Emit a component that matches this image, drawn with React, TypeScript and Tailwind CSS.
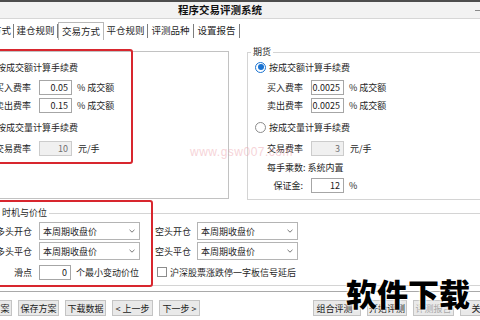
import { ReactNode } from "react";

const FONT = "font-['Noto_Sans_CJK_SC','Microsoft_YaHei',sans-serif]";

function Radio({ checked }: { checked?: boolean }) {
    return checked ? (
        <span className="w-[11px] h-[11px] rounded-full border border-[#1a73d1] flex items-center justify-center shrink-0 bg-white">
            <span className="w-[6px] h-[6px] rounded-full bg-[#1a73d1]" />
        </span>
    ) : (
        <span className="w-[11px] h-[11px] rounded-full border border-[#8c8c8c] bg-white shrink-0" />
    );
}

function Field({ value, disabled, w = "w-[33px]" }: { value: string; disabled?: boolean; w?: string }) {
    return (
        <div className={`${w} h-[15px] border flex items-center justify-end pr-[3px] shrink-0 ${disabled ? "bg-[#f0f0f0] border-[#cccccc] text-[#707070]" : "bg-white border-[#a6a6a6] text-[#1a1a1a]"}`}>
            {value}
        </div>
    );
}

function Label({ children }: { children: ReactNode }) {
    return <div className="w-[44px] pr-[8px] text-right shrink-0 whitespace-nowrap">{children}</div>;
}

function Row({ children, className = "" }: { children: ReactNode; className?: string }) {
    return <div className={`h-[18px] flex items-center ${className}`}>{children}</div>;
}

interface FeeProps {
    buy: string;
    sell: string;
    perLot: string;
    futures?: boolean;
}

function FeeRows({ buy, sell, perLot, futures }: FeeProps) {
    return (
        <>
            <Row className="gap-[3px]">
                <Radio checked />
                <span>按成交额计算手续费</span>
            </Row>
            <Row className="mt-[2px] pl-[12px]">
                <Label>买入费率</Label>
                <Field value={buy} />
                <span className="ml-[5px]">% 成交额</span>
            </Row>
            <Row className="pl-[12px]">
                <Label>卖出费率</Label>
                <Field value={sell} />
                <span className="ml-[5px]">% 成交额</span>
            </Row>
            <Row className="mt-[4px] gap-[3px]">
                <Radio />
                <span>按成交量计算手续费</span>
            </Row>
            <Row className="mt-[3px] pl-[12px]">
                <Label>交易费率</Label>
                <Field value={perLot} disabled />
                <span className="ml-[6px]">元/手</span>
            </Row>
            {futures && (
                <>
                    <Row className="mt-[1px] pl-[12px]">
                        <span>每手乘数: 系统内置</span>
                    </Row>
                    <Row className="pl-[12px]">
                        <Label>保证金:</Label>
                        <Field value="12" />
                        <span className="ml-[5px]">%</span>
                    </Row>
                </>
            )}
        </>
    );
}

function Select({ value }: { value: string }) {
    return (
        <div className="w-[101px] h-[18px] border border-[#b4b4b4] bg-white flex items-center pl-[3px] pr-[4px] shrink-0">
            <span className="flex-1">{value}</span>
            <svg width="6" height="4" viewBox="0 0 6 4" className="text-[#777]">
                <path d="M0.5 0.8 L3 3.2 L5.5 0.8" fill="none" stroke="currentColor" strokeWidth="1" />
            </svg>
        </div>
    );
}

function Btn({ children, w = "w-[41px]", disabled }: { children: ReactNode; w?: string; disabled?: boolean }) {
    return (
        <div className={`${w} h-[16px] shrink-0 border border-[#c4c4c4] bg-[#e9e9e9] flex items-center justify-center whitespace-nowrap ${disabled ? "text-[#a8a8a8]" : "text-[#1a1a1a]"}`}>
            {children}
        </div>
    );
}

const tabs = [
    { name: "方式", w: "w-[24px] ml-[-10px] justify-end pr-[2px]" },
    { name: "建仓规则", w: "w-[44px] justify-center" },
    { name: "交易方式", w: "w-[46px] justify-center", active: true },
    { name: "平仓规则", w: "w-[44px] justify-center" },
    { name: "评测品种", w: "w-[46px] justify-center" },
    { name: "设置报告", w: "w-[46px] justify-center" },
];

export default function App() {
    return (
        <div className={`w-[480px] h-[320px] overflow-hidden relative bg-white text-[9px] leading-none text-[#1f1f1f] ${FONT}`}>
            <div className="h-[2px] bg-[#4d4d4d]" />
            <div className="h-[17px] bg-[#f2f2f2] border-b border-[#d6d6d6] flex items-center pl-[178px]">
                <span className="font-bold text-[10.5px] text-[#111]">程序交易评测系统</span>
                <span className="ml-auto mr-[-3px] w-[8px] h-[1px] bg-[#8a8a8a]" />
            </div>

            {/* tabs */}
            <div className="h-[21px] flex items-end text-[9.5px]">
                {tabs.map(t =>
                    t.active ? (
                        <div key={t.name} className={`${t.w} h-[18px] flex items-center border border-b-0 border-[#b8b8b8] bg-white`}>
                            {t.name}
                        </div>
                    ) : (
                        <div key={t.name} className={`${t.w} h-[14px] mb-[2px] flex items-center border-r border-[#7d7d7d] whitespace-nowrap`}>
                            {t.name}
                        </div>
                    )
                )}
            </div>

            {/* fee settings */}
            <div className="mt-[6px] flex items-start">
                <div className="ml-[-25px] w-[254px] h-[148px] mt-[5px] shrink-0 border border-[#c2c2c2] bg-white pt-[6px] pl-[7px]">
                    <FeeRows buy="0.05" sell="0.15" perLot="10" />
                </div>
                <fieldset className="ml-[18px] w-[250px] h-[154px] shrink-0 border border-[#d4d4d4]">
                    <legend className="ml-[3px] px-[2px] leading-[12px] h-[12px]">期货</legend>
                    <div className="pl-[7px]">
                        <FeeRows buy="0.0025" sell="0.0025" perLot="3" futures />
                    </div>
                </fieldset>
            </div>

            {/* timing and price */}
            <fieldset className="mt-[7px] ml-[-10px] w-[500px] h-[79px] border border-[#d4d4d4]">
                <legend className="ml-[9px] px-[2px] leading-[12px] h-[12px]">时机与价位</legend>
                <div className="pt-[3px]">
                    <div className="h-[18px] flex items-center">
                        <div className="w-[149px] flex items-center shrink-0">
                            <div className="w-[44px] pr-[3px] text-right shrink-0">多头开仓</div>
                            <div className="ml-[4px]"><Select value="本周期收盘价" /></div>
                        </div>
                        <div className="ml-[15px] w-[42px] shrink-0">空头开仓</div>
                        <Select value="本周期收盘价" />
                    </div>
                    <div className="mt-[2px] h-[18px] flex items-center">
                        <div className="w-[149px] flex items-center shrink-0">
                            <div className="w-[44px] pr-[3px] text-right shrink-0">多头平仓</div>
                            <div className="ml-[4px]"><Select value="本周期收盘价" /></div>
                        </div>
                        <div className="ml-[15px] w-[42px] shrink-0">空头平仓</div>
                        <Select value="本周期收盘价" />
                    </div>
                    <div className="mt-[4px] h-[16px] flex items-center">
                        <div className="w-[149px] flex items-center shrink-0">
                            <div className="w-[44px] pr-[3px] text-right shrink-0">滑点</div>
                            <div className="ml-[4px]"><Field value="0" w="w-[32px]" /></div>
                            <span className="ml-[5px] whitespace-nowrap">个最小变动价位</span>
                        </div>
                        <div className="ml-[17px] flex items-center gap-[3px]">
                            <span className="w-[10px] h-[10px] border border-[#8c8c8c] bg-white" />
                            <span className="whitespace-nowrap">沪深股票涨跌停一字板信号延后</span>
                        </div>
                    </div>
                </div>
            </fieldset>

            <div className="mt-[5px] border-t border-[#a9a9a9]" />

            {/* buttons */}
            <div className="mt-[8px] flex items-center">
                <div className="ml-[-29px] flex gap-[6px]">
                    <Btn>保存方案</Btn>
                    <Btn>保存方案</Btn>
                    <Btn>下载数据</Btn>
                    <Btn>&lt; 上一步</Btn>
                    <Btn>下一步 &gt;</Btn>
                </div>
                <div className="ml-[113px] flex gap-[6px]">
                    <Btn w="w-[48px]">
                        组合评测<span className="ml-[2px] text-[6px] text-[#666]">▾</span>
                    </Btn>
                    <Btn w="w-[40px]">开始评测</Btn>
                    <Btn disabled>评测报告</Btn>
                    <Btn>关闭</Btn>
                </div>
            </div>

            {/* red annotation frames */}
            <div className="absolute left-[-10px] top-[49px] w-[143px] h-[115px] border-2 border-[#d8262e] rounded-[3px]" />
            <div className="absolute left-[-10px] top-[200px] w-[163px] h-[87px] border-2 border-[#d8262e] rounded-[3px]" />

            {/* watermarks */}
            <div className="absolute left-[190px] top-[146px] text-[12px] leading-none tracking-[0.5px] text-[#ec9faa] opacity-45 font-['Liberation_Sans',sans-serif]">
                www.gsw007.com
            </div>
            <div className="absolute left-[346px] top-[277px] text-[31px] leading-none font-black text-black [text-shadow:0_0_2px_#fff,0_0_2px_#fff,0_0_3px_#fff]">
                软件下载
            </div>
        </div>
    );
}
